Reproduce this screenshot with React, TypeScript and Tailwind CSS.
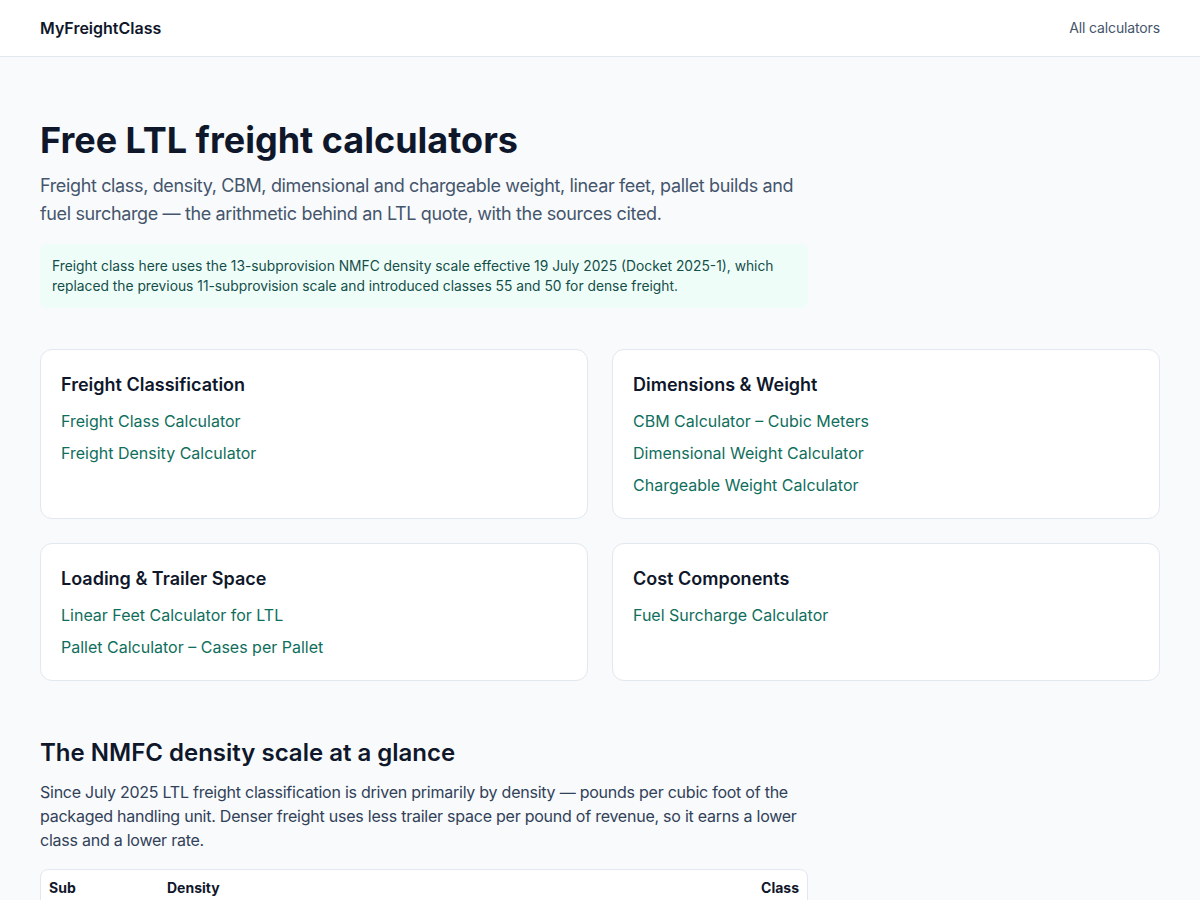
const groups = [
  {
    title: "Freight Classification",
    links: ["Freight Class Calculator", "Freight Density Calculator"],
  },
  {
    title: "Dimensions & Weight",
    links: [
      "CBM Calculator – Cubic Meters",
      "Dimensional Weight Calculator",
      "Chargeable Weight Calculator",
    ],
  },
  {
    title: "Loading & Trailer Space",
    links: ["Linear Feet Calculator for LTL", "Pallet Calculator – Cases per Pallet"],
  },
  {
    title: "Cost Components",
    links: ["Fuel Surcharge Calculator"],
  },
];

export default function App() {
  return (
    <div
      className="min-h-screen bg-slate-50 text-slate-900"
      style={{ fontFamily: "Inter, 'Liberation Sans', sans-serif" }}
    >
      {/* Header */}
      <header className="h-[57px] bg-white border-b border-slate-200">
        <div className="mx-auto max-w-[1120px] h-full flex items-center justify-between">
          <a href="#" className="text-base font-semibold text-slate-900">
            MyFreightClass
          </a>
          <a href="#" className="text-sm tracking-[-0.01em] text-slate-600">
            All calculators
          </a>
        </div>
      </header>

      <main className="mx-auto max-w-[1120px] pt-[63px] pb-16">
        {/* Hero */}
        <section className="max-w-3xl">
          <h1 className="text-4xl font-bold leading-10 text-slate-900">
            Free LTL freight calculators
          </h1>
          <p className="mt-3 text-lg leading-7 tracking-[-0.02em] text-slate-600">
            Freight class, density, CBM, dimensional and chargeable weight, linear feet, pallet
            builds and fuel surcharge — the arithmetic behind an LTL quote, with the sources cited.
          </p>
          <div className="mt-4 rounded-md bg-[#effdf8] px-3 py-3 text-[13.8px] leading-5 text-[#134e4a]">
            Freight class here uses the 13-subprovision NMFC density scale effective 19 July 2025
            (Docket 2025-1), which replaced the previous 11-subprovision scale and introduced
            classes 55 and 50 for dense freight.
          </div>
        </section>

        {/* Calculator groups */}
        <section className="mt-[41px] grid grid-cols-2 gap-6">
          {groups.map((g) => (
            <div
              key={g.title}
              className="rounded-xl border border-slate-200 bg-white px-5 pt-[21px] pb-[21px]"
            >
              <h2 className="text-lg font-semibold leading-7 text-slate-900">{g.title}</h2>
              <ul className="mt-[10px] flex flex-col gap-2">
                {g.links.map((l) => (
                  <li key={l}>
                    <a href="#" className="text-base leading-6 text-[#0f6e5c]">
                      {l}
                    </a>
                  </li>
                ))}
              </ul>
            </div>
          ))}
        </section>

        {/* Density scale */}
        <section className="mt-14 max-w-3xl">
          <h2 className="text-2xl font-semibold leading-8 text-slate-900">
            The NMFC density scale at a glance
          </h2>
          <p className="mt-[11px] text-base leading-6 tracking-[-0.015em] text-slate-700">
            Since July 2025 LTL freight classification is driven primarily by density — pounds per
            cubic foot of the packaged handling unit. Denser freight uses less trailer space per
            pound of revenue, so it earns a lower class and a lower rate.
          </p>
          <div className="mt-[17px] overflow-hidden rounded-lg border border-slate-200 bg-white">
            <table className="w-full text-sm">
              <thead>
                <tr className="text-left">
                  <th className="px-2 py-2 w-[118px] font-bold">Sub</th>
                  <th className="px-2 py-2 font-bold">Density</th>
                  <th className="px-2 py-2 text-right font-bold">Class</th>
                </tr>
              </thead>
              <tbody>
                <tr>
                  <td className="px-2 py-2 border-t border-slate-200">1</td>
                  <td className="px-2 py-2 border-t border-slate-200">Less than 1</td>
                  <td className="px-2 py-2 border-t border-slate-200 text-right">400</td>
                </tr>
              </tbody>
            </table>
          </div>
        </section>
      </main>
    </div>
  );
}
